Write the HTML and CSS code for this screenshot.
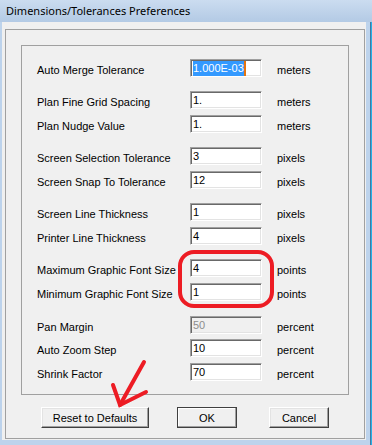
FILE: index.html
```
<!DOCTYPE html>
<html lang="en">
<head>
    <meta charset="UTF-8">
    <title>Dimensions/Tolerances Preferences</title>
    <link rel="stylesheet" href="styles.css">
</head>
<body>
    <div class="window">
        <div class="titlebar">Dimensions/Tolerances Preferences</div>
        <div class="client">
            <div class="frame">
                <div class="group">
                    <div class="row">
                        <span class="label">Auto Merge Tolerance</span>
                        <div class="field"><span class="selected">1.000E-03</span></div>
                        <span class="unit">meters</span>
                    </div>
                    <div class="row sep">
                        <span class="label">Plan Fine Grid Spacing</span>
                        <div class="field">1.</div>
                        <span class="unit">meters</span>
                    </div>
                    <div class="row">
                        <span class="label">Plan Nudge Value</span>
                        <div class="field">1.</div>
                        <span class="unit">meters</span>
                    </div>
                    <div class="row sep">
                        <span class="label">Screen Selection Tolerance</span>
                        <div class="field">3</div>
                        <span class="unit">pixels</span>
                    </div>
                    <div class="row">
                        <span class="label">Screen Snap To Tolerance</span>
                        <div class="field">12</div>
                        <span class="unit">pixels</span>
                    </div>
                    <div class="row sep">
                        <span class="label">Screen Line Thickness</span>
                        <div class="field">1</div>
                        <span class="unit">pixels</span>
                    </div>
                    <div class="row">
                        <span class="label">Printer Line Thickness</span>
                        <div class="field">4</div>
                        <span class="unit">pixels</span>
                    </div>
                    <div class="row sep">
                        <span class="label">Maximum Graphic Font Size</span>
                        <div class="field">4</div>
                        <span class="unit">points</span>
                    </div>
                    <div class="row">
                        <span class="label">Minimum Graphic Font Size</span>
                        <div class="field">1</div>
                        <span class="unit">points</span>
                    </div>
                    <div class="row sep wide">
                        <span class="label">Pan Margin</span>
                        <div class="field disabled">50</div>
                        <span class="unit">percent</span>
                    </div>
                    <div class="row tight">
                        <span class="label">Auto Zoom Step</span>
                        <div class="field">10</div>
                        <span class="unit">percent</span>
                    </div>
                    <div class="row">
                        <span class="label">Shrink Factor</span>
                        <div class="field">70</div>
                        <span class="unit">percent</span>
                    </div>
                </div>
                <div class="buttons">
                    <button class="button reset">Reset to Defaults</button>
                    <button class="button ok">OK</button>
                    <button class="button cancel">Cancel</button>
                </div>
            </div>
        </div>

        <!-- red markup drawn over the dialog -->
        <svg class="markup" width="372" height="445" viewBox="0 0 372 445">
            <rect x="180" y="252" width="92" height="54" rx="14" fill="none" stroke="#ed1c24" stroke-width="4"/>
            <g stroke="#ed1c24" stroke-width="4" stroke-linecap="round" fill="none">
                <path d="M144 362 L120 405"/>
                <path d="M113 385 L120 405 L146 392"/>
            </g>
        </svg>
    </div>
</body>
</html>
```

FILE: styles.css
```
body {
    margin: 0;
    font-family: "Liberation Sans", Arial, sans-serif;
    font-size: 11px;
    color: #000;
}
.window {
    position: relative;
    width: 372px;
    height: 445px;
    box-sizing: border-box;
    background: #bdd3ec;
    display: flex;
    flex-direction: column;
    box-shadow: inset -1px 0 #24b2e8, inset -2px 0 #46789e;
}
.titlebar {
    height: 22px;
    line-height: 22px;
    padding-left: 6px;
    font-family: "Noto Sans", sans-serif;
    font-size: 11px;
    background: linear-gradient(#cbdcf0, #b3cae5);
}
.client {
    flex: 1;
    margin: 0 6px 5px 2px;
    background: #f0f0f0;
    display: flex;
}
.frame {
    flex: 1;
    margin: 7px 1px 1px 3px;
    border: 1px solid #a0a0a0;
}
.group {
    margin: 15px 15px 0 15px;
    border: 1px solid #a0a0a0;
    padding: 13px 0 0 15px;
    box-sizing: border-box;
    height: 350px;
}
.row {
    display: flex;
    align-items: center;
    height: 18px;
    margin-top: 6px;
}
.row:first-child {
    margin-top: 0;
}
.row.sep {
    margin-top: 14px;
}
.row.wide {
    margin-top: 15px;
}
.row.tight {
    margin-top: 5px;
}
.label {
    width: 153px;
    padding-top: 3px;
}
.field {
    width: 72px;
    height: 18px;
    box-sizing: border-box;
    background: #fff;
    border: 1px solid;
    border-color: #a0a0a0 #fff #fff #a0a0a0;
    box-shadow: inset 1px 1px #696969, inset -1px -1px #e3e3e3;
    padding: 0 0 0 2px;
    line-height: 16px;
    font-size: 11px;
}
.field.disabled {
    background: #f0f0f0;
    color: #8d8d8d;
}
.selected {
    background: #3399ff;
    color: #fff;
    border-right: 2px solid #e4740f;
    padding: 1px 0 2px;
}
.unit {
    padding: 3px 0 0 15px;
}
.buttons {
    display: flex;
    margin: 12px 0 0 35px;
}
.button {
    height: 21px;
    width: 60px;
    padding: 0;
    font-family: "Liberation Sans", Arial, sans-serif;
    font-size: 11px;
    color: #000;
    background: #f0f0f0;
    border: 1px solid;
    border-color: #fff #404040 #404040 #fff;
    box-shadow: inset -1px -1px #a0a0a0, inset 1px 1px #e3e3e3;
}
.reset {
    width: 108px;
}
.ok {
    margin-left: 28px;
    border-color: #404040;
    box-shadow: inset -1px -1px #a0a0a0, inset 1px 1px #fff;
}
.cancel {
    margin-left: 32px;
}
.markup {
    position: absolute;
    left: 0;
    top: 0;
    pointer-events: none;
}
```
